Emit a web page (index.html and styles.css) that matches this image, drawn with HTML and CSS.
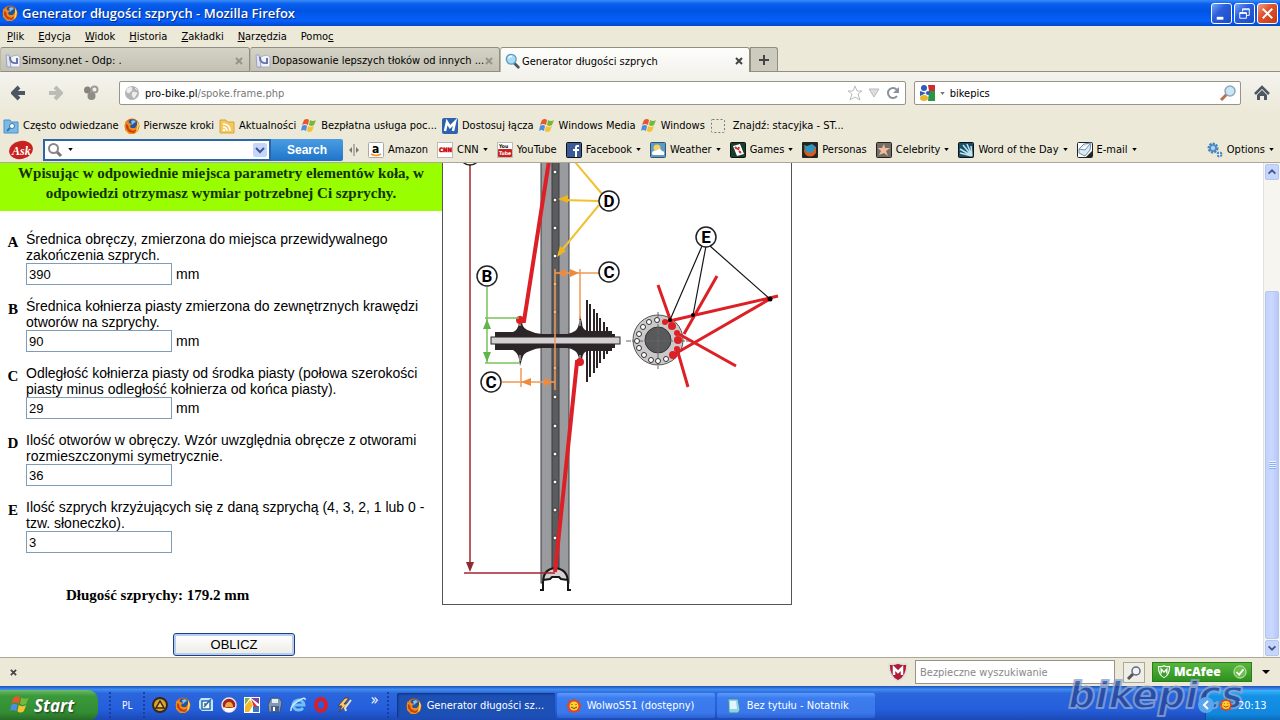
FILE: index.html
```html
<!DOCTYPE html>
<html lang="pl">

<head>
    <meta charset="UTF-8">
    <meta name="viewport" content="width=device-width, initial-scale=1.0">
    <title>Generator długości szprych</title>
    <link rel="stylesheet" href="styles.css">
</head>

<body>
    <!-- shared icons -->
    <svg class="defs" aria-hidden="true">
        <symbol id="firefox" viewBox="0 0 16 16">
            <circle cx="8" cy="8" r="7.5" fill="#d9601a" />
            <circle cx="8.5" cy="6.5" r="5" fill="#24559c" />
            <path d="M7 3l3-1 2 2-2 1-2 2z" fill="#7fc4ec" />
            <path d="M1 3l1 2 2-3 1 3 3 1-2 2 1 2 4 0 2-3 0-3 2 4-1 5-4 3-5 0-4-4z" fill="#ef8a1d" />
            <path d="M2 6l2 1 1 4 4 2 4-2-3 4-5-1-3-4z" fill="#c8410f" />
            <path d="M13 3l2 4-1 5-2 2 1-5z" fill="#ffd04a" />
        </symbol>
        <symbol id="flag" viewBox="0 0 16 16">
            <path d="M3 2q3-2 5 0L7 7Q4 5 1 7z" fill="#e8562a" />
            <path d="M9 2q3 2 6 0l-2 5q-3 2-5 0z" fill="#77b83a" />
            <path d="M1 8q3-2 5 0l-1 5q-3-2-5 0z" fill="#4a8fe0" />
            <path d="M7 8q3 2 6 0l-2 5q-3 2-5 0z" fill="#f6c330" />
        </symbol>
        <symbol id="page" viewBox="0 0 16 16">
            <path d="M4 4l8-2 3 2v10H4z" fill="#f4f5fb" stroke="#a9aec6" />
            <path d="M1 2l3 0 2 12H2z" fill="#e3e6f2" stroke="#9aa2c0" />
            <path d="M5 4q0 7 7 6V5" fill="none" stroke="#6474a8" stroke-width="2" />
        </symbol>
        <symbol id="lens" viewBox="0 0 18 18">
            <path d="M10 11l5 5" stroke="#4b5560" stroke-width="3" stroke-linecap="round" />
            <circle cx="7" cy="7" r="5.5" fill="#a9dcf5" stroke="#5f9cc0" stroke-width="1.5" />
            <path d="M4 6q1-3 4-2" stroke="#fff" stroke-width="1.5" fill="none" />
        </symbol>
        <symbol id="sun" viewBox="0 0 16 16">
            <path d="M8 0l2 3 3-1 0 3 3 3-3 2 1 4-4-1-2 3-2-3-4 1 1-4-3-2 3-3-1-3 4 1z" fill="#e8431b" />
            <circle cx="8" cy="8" r="4.5" fill="#ffd22e" />
            <path d="M6 6v1M10 6v1M5 9q3 3 6 0" stroke="#8a3a00" fill="none" />
        </symbol>
        <symbol id="shield" viewBox="0 0 20 20">
            <path d="M1 2q5 1 9-1 4 2 9 1 0 13-9 17Q1 15 1 2z" fill="#b01c36" stroke="#ddd" stroke-width="1.5" />
            <path d="M6 13V6l4 4 4-4v7" fill="none" stroke="#fff" stroke-width="2.5" />
        </symbol>
    </svg>

    <header class="titlebar">
        <svg class="icon"><use href="#firefox" /></svg>
        <h1>Generator długości szprych - Mozilla Firefox</h1>
        <div class="window-buttons">
            <button aria-label="Minimalizuj"><svg viewBox="0 0 20 20"><path d="M5 15h7" stroke="#fff" stroke-width="3" /></svg></button>
            <button aria-label="Przywróć"><svg viewBox="0 0 20 20"><path d="M8 8V5h7v7h-3M8 6h7M5 9h7v6H5zM5 10h7" stroke="#fff" fill="none" /></svg></button>
            <button class="close" aria-label="Zamknij"><svg viewBox="0 0 20 20"><path d="M5 5l10 10M15 5L5 15" stroke="#fff" stroke-width="2" /></svg></button>
        </div>
    </header>

    <nav class="menu">
        <a href="#"><u>P</u>lik</a>
        <a href="#"><u>E</u>dycja</a>
        <a href="#"><u>W</u>idok</a>
        <a href="#"><u>H</u>istoria</a>
        <a href="#"><u>Z</u>akładki</a>
        <a href="#"><u>N</u>arzędzia</a>
        <a href="#">Pomo<u>c</u></a>
    </nav>

    <div class="tabs">
        <div class="tab">
            <svg class="icon"><use href="#page" /></svg>
            <span>Simsony.net - Odp: .</span>
            <button aria-label="Zamknij kartę"><svg viewBox="0 0 8 8"><path d="M1 1l6 6M7 1L1 7" /></svg></button>
        </div>
        <div class="tab">
            <svg class="icon"><use href="#page" /></svg>
            <span>Dopasowanie lepszych tłoków od innych ...</span>
            <button aria-label="Zamknij kartę"><svg viewBox="0 0 8 8"><path d="M1 1l6 6M7 1L1 7" /></svg></button>
        </div>
        <div class="tab active">
            <svg class="icon"><use href="#lens" /></svg>
            <span>Generator długości szprych</span>
            <button aria-label="Zamknij kartę"><svg viewBox="0 0 8 8"><path d="M1 1l6 6M7 1L1 7" /></svg></button>
        </div>
        <button class="new-tab" aria-label="Nowa karta"><svg viewBox="0 0 12 12"><path d="M6 1v10M1 6h10" stroke="#444" stroke-width="2" /></svg></button>
    </div>

    <div class="navbar">
        <button aria-label="Wstecz"><svg viewBox="0 0 16 16"><path d="M8 2L2 8l6 6M3 8h11" fill="none" stroke="#4d5663" stroke-width="4" /></svg></button>
        <button aria-label="Dalej"><svg viewBox="0 0 16 16"><path d="M8 2l6 6-6 6M13 8H2" fill="none" stroke="#bcbcb6" stroke-width="4" /></svg></button>
        <button aria-label="Dodatek"><svg viewBox="0 0 16 16"><circle cx="4.5" cy="5" r="3.5" fill="#85857f" /><circle cx="11.5" cy="4.5" r="3" fill="none" stroke="#9c9c96" stroke-width="2" /><circle cx="8.5" cy="11" r="4" fill="#8e8e88" /></svg></button>
        <div class="url-box">
            <svg class="icon" viewBox="0 0 16 16"><circle cx="8" cy="8" r="7" fill="#b4b4b4" /><path d="M3 4l4-2 1 3-3 3-2-1zM9 7l4 1-3 5-2-3zM11 3l2 2" fill="#eee" stroke="#eee" /></svg>
            <a href="#">pro-bike.pl<span>/spoke.frame.php</span></a>
            <svg class="icon" viewBox="0 0 16 16"><path d="M8 1l2 5h5l-4 3 2 6-5-3-5 3 2-6-4-3h5z" fill="#fff" stroke="#bbb" /></svg>
            <svg class="small-icon" viewBox="0 0 12 12"><path d="M1 2h10L6 10z" fill="#ddd" stroke="#bbb" /></svg>
            <svg class="icon" viewBox="0 0 16 16"><path d="M12 11a5 5 0 1 1 0-6" fill="none" stroke="#8a929b" stroke-width="2" /><path d="M14 2v6H8z" fill="#8a929b" /></svg>
        </div>
        <div class="search-box">
            <svg class="icon" viewBox="0 0 16 16"><path d="M8 0h8v6H8z" fill="#d12b2b" /><path d="M9 6h7v10H9z" fill="#2a9644" /><path d="M0 0h9l1 6-1 10H0z" fill="#fff" /><ellipse cx="5" cy="3" rx="3" ry="3" fill="#2d5bc0" /><path d="M1 6l6 2-6 3z" fill="#2d5bc0" /><circle cx="9" cy="8" r="2" fill="#2d5bc0" /><ellipse cx="5" cy="13" rx="4" ry="3" fill="#e8b52c" /></svg>
            <svg class="caret" viewBox="0 0 6 4"><path d="M0 0h6L3 4z" fill="#777" /></svg>
            <input type="text" value="bikepics" aria-label="Szukaj">
            <svg class="icon" viewBox="0 0 16 16"><path d="M7 9l-6 6" stroke="#b5714a" stroke-width="3" /><circle cx="10" cy="6" r="5" fill="#c9e6f7" stroke="#8fa9bb" stroke-width="1.5" /></svg>
        </div>
        <button aria-label="Strona startowa"><svg viewBox="0 0 16 16"><path d="M1 9l7-7 7 7" fill="none" stroke="#4d5663" stroke-width="2.5" /><path d="M3 10l5-5 5 5v5h-3v-4H6v4H3z" fill="#4d5663" /></svg></button>
    </div>

    <nav class="bookmarks">
        <a href="#"><svg class="icon" viewBox="0 0 16 16"><path d="M1 2h6l1 2h7v11H1z" fill="#7db9e6" stroke="#4a90c8" /><circle cx="9" cy="8" r="2.5" fill="#fff" stroke="#2f76b5" /><path d="M7 10l-3 3" stroke="#2f76b5" stroke-width="2" /></svg>Często odwiedzane</a>
        <a href="#"><svg class="icon"><use href="#firefox" /></svg>Pierwsze kroki</a>
        <a href="#"><svg class="icon" viewBox="0 0 16 16"><path d="M1 2h6l1 2h7v11H1z" fill="#f5c95c" stroke="#d9a43a" /><circle cx="5" cy="12" r="1.3" fill="#fff" /><path d="M4 9q4 0 4 4M4 6q7 0 7 7" fill="none" stroke="#fff" stroke-width="1.5" /></svg>Aktualności</a>
        <a href="#"><svg class="icon"><use href="#flag" /></svg>Bezpłatna usługa poc...</a>
        <a href="#"><svg class="icon" viewBox="0 0 16 16"><rect width="16" height="16" rx="2" fill="#2f62ad" /><path d="M3 13l2-9 3 5 5-5-2 9" fill="none" stroke="#fff" stroke-width="2.5" /></svg>Dostosuj łącza</a>
        <a href="#"><svg class="icon"><use href="#flag" /></svg>Windows Media</a>
        <a href="#"><svg class="icon"><use href="#flag" /></svg>Windows</a>
        <a href="#" class="wide"><svg class="icon" viewBox="0 0 16 16"><rect x="1.5" y="1.5" width="13" height="13" rx="1" fill="none" stroke="#777" stroke-dasharray="2 2" /></svg>Znajdź: stacyjka - ST...</a>
    </nav>

    <div class="toolbar">
        <svg class="ask" viewBox="0 0 26 20"><ellipse cx="13" cy="10" rx="12" ry="9" fill="#c9211e" transform="rotate(-12 13 10)" /><text x="4" y="15">Ask</text></svg>
        <div class="ask-search">
            <svg class="icon" viewBox="0 0 16 16"><path d="M9 9l5 5" stroke="#777" stroke-width="3" /><circle cx="6.5" cy="6.5" r="4.5" fill="#fff" stroke="#888" stroke-width="2" /></svg>
            <svg class="caret" viewBox="0 0 6 4"><path d="M0 0h6L3 4z" /></svg>
            <input type="text" aria-label="Ask">
            <button aria-label="Rozwiń"><svg viewBox="0 0 14 14"><path d="M3 5l4 4 4-4" fill="none" stroke="#40568d" stroke-width="2" /></svg></button>
        </div>
        <button class="ask-button">Search</button>
        <svg class="splitter" viewBox="0 0 10 16"><path d="M5 2v12" stroke="#777" /><path d="M3 5L0 8l3 3zM7 5l3 3-3 3z" fill="#777" /></svg>
        <nav class="links">
            <a href="#"><svg class="icon" viewBox="0 0 16 16"><rect x=".5" y=".5" width="15" height="15" rx="1" fill="#fff" stroke="#aaa" /><text x="4" y="11" font-size="12">a</text><path d="M3 12q5 3 10 0" fill="none" stroke="#f0962a" stroke-width="1.5" /></svg>Amazon</a>
            <a href="#"><svg class="icon" viewBox="0 0 16 16"><rect x=".5" y=".5" width="15" height="15" fill="#fff" stroke="#bbb" /><text x="2" y="10" font-size="6" fill="#c00" stroke="#c00" stroke-width=".5">CNN</text></svg>CNN<svg class="caret" viewBox="0 0 6 4"><path d="M0 0h6L3 4z" /></svg></a>
            <a href="#"><svg class="icon" viewBox="0 0 16 16"><rect x=".5" y=".5" width="15" height="15" fill="#fff" stroke="#bbb" /><rect x="1" y="7" width="14" height="8" rx="1" fill="#c9211e" /><text x="2" y="6" font-size="5">You</text><text x="2" y="13" font-size="5" fill="#fff">Tube</text></svg>YouTube</a>
            <a href="#"><svg class="icon" viewBox="0 0 16 16"><rect x=".5" y=".5" width="15" height="15" rx="1" fill="#3b5998" stroke="#111" /><path d="M13 4h-2q-1 0-1 2v9M7 8h6" fill="none" stroke="#fff" stroke-width="2" /></svg>Facebook<svg class="caret" viewBox="0 0 6 4"><path d="M0 0h6L3 4z" /></svg></a>
            <a href="#"><svg class="icon" viewBox="0 0 16 16"><rect x=".5" y=".5" width="15" height="15" rx="1" fill="#5c9bc5" stroke="#34546d" /><circle cx="7" cy="6" r="3.5" fill="#f4d460" /><path d="M2 12q0-4 4-3 4-4 6 0 3 0 2 4H3z" fill="#fff" /></svg>Weather<svg class="caret" viewBox="0 0 6 4"><path d="M0 0h6L3 4z" /></svg></a>
            <a href="#"><svg class="icon" viewBox="0 0 16 16"><rect x=".5" y=".5" width="15" height="15" rx="1" fill="#173f2c" stroke="#111" /><path d="M3 4l7-2 4 10-7 2z" fill="#fff" /><path d="M5 5l2 2M9 5l-1 3M9 9l2 2" stroke="#c33" stroke-width="2" /></svg>Games<svg class="caret" viewBox="0 0 6 4"><path d="M0 0h6L3 4z" /></svg></a>
            <a href="#"><svg class="icon" viewBox="0 0 16 16"><rect width="16" height="16" rx="1" fill="#26251f" /><path d="M2 3l3 1 5-2 4 3v6l-5 3-5-2z" fill="#2f95bd" /><path d="M2 3q0 8 6 8 4 0 5-6 3 6-2 9-8 2-9-5z" fill="#e4571c" /></svg>Personas</a>
            <a href="#"><svg class="icon" viewBox="0 0 16 16"><rect x=".5" y=".5" width="15" height="15" rx="1" fill="#756d67" stroke="#222" /><path d="M8 2l1 4 5 0-4 3 2 5-4-3-5 2 2-4-3-3h4z" fill="#f1bd9c" /></svg>Celebrity<svg class="caret" viewBox="0 0 6 4"><path d="M0 0h6L3 4z" /></svg></a>
            <a href="#"><svg class="icon" viewBox="0 0 16 16"><rect x=".5" y=".5" width="15" height="15" rx="1" fill="#17506c" stroke="#111" /><path d="M14 14L2 11M14 14L2 7M14 14L5 3M14 14L9 2M14 14L13 4" stroke="#bfe4ee" stroke-width="1.5" /></svg>Word of the Day<svg class="caret" viewBox="0 0 6 4"><path d="M0 0h6L3 4z" /></svg></a>
            <a href="#"><svg class="icon" viewBox="0 0 16 16"><rect x=".5" y=".5" width="15" height="15" rx="1" fill="#fff" stroke="#222" /><path d="M2 7l5-5 7-1-1 7-5 6-6-3zM2 7l6 1 5-6" fill="#dceaf5" stroke="#6f8ea8" /><path d="M9 15l6-6v6z" fill="#223" /></svg>E-mail<svg class="caret" viewBox="0 0 6 4"><path d="M0 0h6L3 4z" /></svg></a>
        </nav>
        <a href="#" class="options"><svg class="icon" viewBox="0 0 16 16"><circle cx="6" cy="6" r="4" fill="#5b9bd5" stroke="#4a85bd" stroke-width="3" stroke-dasharray="2 1" /><circle cx="6" cy="6" r="2" fill="#b9d8f0" /><circle cx="12.5" cy="12.5" r="2" fill="#fff" stroke="#4a85bd" stroke-width="2" stroke-dasharray="2 1" /></svg>Options<svg class="caret" viewBox="0 0 6 4"><path d="M0 0h6L3 4z" /></svg></a>
    </div>

    <main class="page">
        <form class="calc">
            <p class="intro">Wpisując w odpowiednie miejsca parametry elementów koła, w odpowiedzi otrzymasz wymiar potrzebnej Ci szprychy.</p>
            <div class="row">
                <b>A</b>
                <div>
                    <label for="a">Średnica obręczy, zmierzona do miejsca przewidywalnego zakończenia szprych.</label>
                    <div class="field"><input type="text" id="a" value="390"> mm</div>
                </div>
            </div>
            <div class="row">
                <b>B</b>
                <div>
                    <label for="b">Średnica kołnierza piasty zmierzona do zewnętrznych krawędzi otworów na szprychy.</label>
                    <div class="field"><input type="text" id="b" value="90"> mm</div>
                </div>
            </div>
            <div class="row">
                <b>C</b>
                <div>
                    <label for="c">Odległość kołnierza piasty od środka piasty (połowa szerokości piasty minus odległość kołnierza od końca piasty).</label>
                    <div class="field"><input type="text" id="c" value="29"> mm</div>
                </div>
            </div>
            <div class="row">
                <b>D</b>
                <div>
                    <label for="d">Ilość otworów w obręczy. Wzór uwzględnia obręcze z otworami rozmieszczonymi symetrycznie.</label>
                    <div class="field"><input type="text" id="d" value="36"></div>
                </div>
            </div>
            <div class="row">
                <b>E</b>
                <div>
                    <label for="e">Ilość szprych krzyżujących się z daną szprychą (4, 3, 2, 1 lub 0 - tzw. słoneczko).</label>
                    <div class="field"><input type="text" id="e" value="3"></div>
                </div>
            </div>
            <p class="result">Długość szprychy: 179.2 mm</p>
            <button type="button" class="submit">OBLICZ</button>
        </form>

        <svg class="diagram" viewBox="1 0 348 441">
            <!-- rim -->
            <rect x="99" y="-2" width="28" height="422" fill="#999b9f" stroke="#3c3c3e" />
            <rect x="110" y="-2" width="7" height="408" fill="#5b5c5f" stroke="#3c3c3e" />
            <path d="M98 427h4v-10q0-12 11-12 12 0 12 12v10h4v3H98z" fill="#fff" />
            <path d="M102 417q0-11 11-12 12 1 12 12l-6-1-6-2-6 2z" fill="#d6cfd1" />
            <path d="M98 427h3v-7q0-14 12-15 13 1 13 15v7h3M101 417l7-1 2-2h7l2 2 7 1" fill="none" stroke="#161616" stroke-width="2" />
            <g fill="#fff" stroke="#333">
                <circle cx="113" cy="9" r="2" /><circle cx="113" cy="37" r="2" /><circle cx="113" cy="65" r="2" />
                <circle cx="113" cy="93" r="2" /><circle cx="113" cy="121" r="2" /><circle cx="113" cy="149" r="2" />
                <circle cx="113" cy="205" r="2" /><circle cx="113" cy="234" r="2" /><circle cx="113" cy="263" r="2" />
                <circle cx="113" cy="291" r="2" /><circle cx="113" cy="319" r="2" /><circle cx="113" cy="347" r="2" />
                <circle cx="113" cy="375" r="2" />
            </g>
            <!-- A -->
            <path d="M28 0v402M22 410h91" stroke="#a3262e" stroke-width="1.5" />
            <path d="M24 399h8l-4 10z" fill="#8f2a30" />
            <!-- hub -->
            <path d="M53 169h18q5-2 6-9l1-8 2 8q1 6 8 8 6 3 12 3h25q5-1 8-3 3-2 4-8l1-8 2 8q0 6 5 8h25v3h3v14h-3v3h-25q-4 1-5 8l-2 7-1-7q-1-6-4-8-4-3-8-3h-25q-6 0-12 3-7 2-8 8l-2 7-1-7q-1-6-6-9H53z" fill="#2c2528" />
            <path d="M145 137v82M148 141v73M152 146v64M155 150v55M158 155v45M162 159v37M165 164v27" stroke="#2c2528" stroke-width="2" />
            <rect x="49" y="174" width="129" height="7" fill="#d3d0d2" stroke="#2c2528" />
            <path d="M78 157v6M138 157v6M78 192v6M138 192v6" stroke="#ddd" />
            <!-- spokes -->
            <path d="M107-2L82 158h-5" fill="none" stroke="#dd1f26" stroke-width="4" />
            <path d="M140 199h-5L113 409" fill="none" stroke="#dd1f26" stroke-width="4" />
            <circle cx="78" cy="157" r="4" fill="#dd1f26" />
            <circle cx="138" cy="199" r="4" fill="#dd1f26" />
            <!-- B -->
            <path d="M45 124v76M43 155h34M43 200h34" stroke="#79c25a" stroke-width="1.5" />
            <path d="M41 166h8l-4-10zM41 189h8l-4 10z" fill="#62b54a" />
            <!-- C -->
            <path d="M113 106v121M138 106v50M113 110h44M79 205v19M60 219h53" stroke="#ee9a55" stroke-width="1.5" />
            <path d="M115 110l9-4v8zM137 110l-9-4v8zM79 219l10-4v8zM112 219l-10-4v8z" fill="#ee8a3c" />
            <!-- D -->
            <path d="M133-1l27 32M157 38l-36-1M157 42l-37 45" stroke="#f1c232" stroke-width="2" />
            <path d="M116 36l10-4v8zM115 94l3-11 6 5z" fill="#f1b51c" />
            <!-- side view of the hub -->
            <circle cx="216" cy="177" r="25" fill="#cbc8ca" stroke="#555" />
            <circle cx="216" cy="177" r="13" fill="#58595b" stroke="#333" />
            <path d="M184 178h64M216 149v57" stroke="#666" stroke-dasharray="5 1" />
            <g fill="#fff" stroke="#333">
                <circle cx="215" cy="157" r="2.5" /><circle cx="207" cy="159" r="2.5" /><circle cx="201" cy="164" r="2.5" />
                <circle cx="197" cy="171" r="2.5" /><circle cx="195" cy="178" r="2.5" /><circle cx="197" cy="185" r="2.5" />
                <circle cx="202" cy="192" r="2.5" /><circle cx="209" cy="197" r="2.5" /><circle cx="216" cy="198" r="2.5" />
                <circle cx="224" cy="196" r="2.5" />
            </g>
            <path d="M216 122l12 34M275 113l-33 58M223 159l113-26M231 192l97-56M235 170l59 33M235 186l11 38" stroke="#dd1f26" stroke-width="3" />
            <g fill="#dd1f26">
                <circle cx="223" cy="159" r="3" /><circle cx="230" cy="163" r="4" /><circle cx="235" cy="170" r="3" />
                <circle cx="236" cy="177" r="4" /><circle cx="235" cy="186" r="3" /><circle cx="231" cy="192" r="4" />
            </g>
            <path d="M260 83l-32 74M264 83l-13 69M268 83l60 53" stroke="#161616" stroke-width="1.2" />
            <circle cx="228" cy="157" r="2" /><circle cx="251" cy="152" r="2" /><circle cx="328" cy="136" r="2.5" />
            <!-- callouts -->
            <g fill="#fff" stroke="#222" stroke-width="1.5">
                <circle cx="28" cy="-8" r="10" /><circle cx="167" cy="38" r="10" /><circle cx="167" cy="109" r="10" />
                <circle cx="45" cy="113" r="10" /><circle cx="49" cy="219" r="10" /><circle cx="264" cy="74" r="10" />
            </g>
            <g class="callouts">
                <text x="167" y="44">D</text>
                <text x="167" y="115">C</text>
                <text x="45" y="119">B</text>
                <text x="49" y="225">C</text>
                <text x="264" y="80">E</text>
            </g>
        </svg>

        <div class="scrollbar">
            <button aria-label="W górę"><svg viewBox="0 0 14 14"><path d="M3 9l4-4 4 4" /></svg></button>
            <div class="track"><div class="thumb"><i></i></div></div>
            <button aria-label="W dół"><svg viewBox="0 0 14 14"><path d="M3 5l4 4 4-4" /></svg></button>
        </div>
    </main>

    <div class="addon-bar">
        <button class="addon-close" aria-label="Zamknij pasek"><svg viewBox="0 0 8 8"><path d="M1 1l6 6M7 1L1 7" stroke="#444" stroke-width="2" /></svg></button>
        <svg class="shield"><use href="#shield" /></svg>
        <input type="text" placeholder="Bezpieczne wyszukiwanie" aria-label="Bezpieczne wyszukiwanie">
        <button class="safe-search" aria-label="Szukaj"><svg viewBox="0 0 16 16"><path d="M7 9l-5 5" stroke="#555" stroke-width="3" /><circle cx="10" cy="6" r="4" fill="#eef4fa" stroke="#667" stroke-width="1.5" /></svg></button>
        <button class="mcafee">
            <svg viewBox="0 0 20 20"><path d="M2 2q4 1 8-1 4 2 8 1 0 12-8 16Q2 14 2 2z" fill="none" stroke="#fff" stroke-width="1.5" /><path d="M6 12V6l4 4 4-4v6" fill="none" stroke="#fff" stroke-width="2" /></svg>
            McAfee
            <svg class="ok" viewBox="0 0 16 16"><circle cx="8" cy="8" r="7" fill="#6cc04a" stroke="#d8f0cc" /><path d="M4 8l3 3 5-6" fill="none" stroke="#fff" stroke-width="2" /></svg>
        </button>
        <svg class="more" viewBox="0 0 8 4"><path d="M0 0h8L4 4z" /></svg>
    </div>

    <footer class="taskbar">
        <button class="start"><svg viewBox="0 0 16 16"><use href="#flag" /></svg>Start</button>
        <span class="grip"></span>
        <span class="lang">PL</span>
        <span class="grip"></span>
        <div class="quick">
            <svg viewBox="0 0 16 16"><circle cx="8" cy="8" r="7" fill="#e0a02c" stroke="#33291b" stroke-width="2" /><path d="M8 4l4 7H4z" fill="#f5c24a" stroke="#33291b" stroke-width="1.5" /></svg>
            <svg><use href="#firefox" /></svg>
            <svg viewBox="0 0 16 16"><path d="M3 1h10l2 2v11H4l-3-3V4z" fill="#bfe6fa" /><path d="M4 4h8v8H4z" fill="#fff" stroke="#2d6ca8" stroke-width="1.5" /><path d="M6 10l7-8M6 7h3" stroke="#2d6ca8" stroke-width="1.5" /></svg>
            <svg viewBox="0 0 16 16"><circle cx="8" cy="8" r="7" fill="#a02424" stroke="#f0e2d8" stroke-width="1.5" /><path d="M2 10q6 2 12 0-2 5-6 5t-6-5z" fill="#fff" /><path d="M4 10q0-5 4-5t4 5z" fill="#f2a53a" /></svg>
            <svg viewBox="0 0 16 16"><rect width="16" height="16" fill="#fff" /><path d="M1 1h5l-5 7z" fill="#7ab648" /><path d="M7 1h8v6z" fill="#8c3f97" /><path d="M1 9l5-6 3 5-4 7H1z" fill="#f0b929" /><path d="M9 9h6v6H9z" fill="#3b78c4" /><path d="M7 2l7 8h-4z" fill="#d8322c" /></svg>
            <svg viewBox="0 0 16 16"><path d="M4 1h8l3 4-2 10H2L1 8z" fill="#8097b8" stroke="#3c5275" /><path d="M5 2h6v4H5z" fill="#e4ecf5" /><path d="M4 9h8v6H4z" fill="#43608e" /><path d="M6 10h2v4H6z" fill="#fff" /></svg>
            <svg viewBox="0 0 16 16"><path d="M13 11a5.5 5 0 1 1 1-3H4" fill="none" stroke="#6fc0f5" stroke-width="3" /><path d="M1 14Q0 9 8 4t7-1" fill="none" stroke="#cbe8fb" stroke-width="1.5" /></svg>
            <svg viewBox="0 0 16 16"><ellipse cx="8" cy="8" rx="5" ry="6" fill="none" stroke="#d81f2a" stroke-width="4" /></svg>
            <svg viewBox="0 0 16 16"><path d="M9 1l-7 8h4l-3 6 9-8H8l5-6z" fill="#f6c97c" stroke="#5b4020" /><path d="M15 3l-6 8 1 3" fill="none" stroke="#f0ddc0" stroke-width="2" /></svg>
        </div>
        <span class="chevrons">»</span>
        <span class="grip"></span>
        <div class="tasks">
            <button class="pressed"><svg><use href="#firefox" /></svg>Generator długości sz...</button>
            <button><svg><use href="#sun" /></svg>WolwoS51 (dostępny)</button>
            <button><svg viewBox="0 0 16 16"><path d="M2 1h10l2 11-2 3H3z" fill="#8fd0ea" stroke="#3e86a8" /><path d="M4 3h6l1 8H4z" fill="#e2f5fb" /></svg>Bez tytułu - Notatnik</button>
        </div>
        <div class="tray">
            <button aria-label="Pokaż ukryte ikony"><svg viewBox="0 0 16 16"><path d="M10 4L6 8l4 4" fill="none" stroke="#fff" stroke-width="2" /></svg></button>
            <svg class="icon"><use href="#sun" /></svg>
            <time>20:13</time>
        </div>
        <svg class="watermark" viewBox="0 0 200 36"><text x="4" y="26">bikepics</text></svg>
    </footer>
</body>

</html>
```
FILE: styles.css
```css
* {
    box-sizing: border-box;
}

body {
    margin: 0;
    height: 100vh;
    display: flex;
    flex-direction: column;
    overflow: hidden;
    background: #ece9d8;
    font-family: Tahoma, "DejaVu Sans Condensed", "DejaVu Sans", sans-serif;
    font-size: 11px;
    color: #000;
}

a {
    color: inherit;
    text-decoration: none;
}

button,
input {
    font: inherit;
    color: inherit;
    margin: 0;
    padding: 0;
    border: 0;
    background: none;
}

svg {
    display: block;
    flex: none;
}

.defs {
    position: absolute;
    width: 0;
    height: 0;
}

.icon {
    width: 16px;
    height: 16px;
}

.small-icon {
    width: 12px;
    height: 12px;
}

.caret {
    width: 5px;
    height: 3px;
}

/* title bar */
.titlebar {
    height: 26px;
    flex: none;
    display: flex;
    align-items: center;
    gap: 4px;
    padding: 0 2px;
    background: linear-gradient(#3a8cf5, #0a5fee 15%, #0054e3 40%, #0660fa 80%, #0348c8);
}

.titlebar h1 {
    flex: 1;
    margin: 0;
    font-family: "Trebuchet MS", "Open Sans", sans-serif;
    font-size: 13px;
    font-weight: 600;
    color: #fff;
    text-shadow: 1px 1px #0a2a80;
}

.window-buttons {
    display: flex;
    gap: 2px;
}

.window-buttons button {
    width: 21px;
    height: 21px;
    border: 1px solid #fff;
    border-radius: 3px;
    background: linear-gradient(135deg, #7aa7f5, #2a5edb 40%, #1c4bc8);
}

.window-buttons .close {
    background: linear-gradient(135deg, #f0a086, #e0532e 40%, #c23a14);
}

/* menu */
.menu {
    height: 21px;
    flex: none;
    display: flex;
    align-items: center;
    gap: 14px;
    padding: 0 7px;
}

/* tabs */
.tabs {
    height: 25px;
    flex: none;
    display: flex;
    border-bottom: 1px solid #8f8e80;
}

.tab {
    width: 250px;
    height: 25px;
    display: flex;
    align-items: center;
    gap: 1px;
    padding: 2px 6px 0 4px;
    border: 1px solid #8f8e80;
    border-left-color: #b9b7a8;
    border-radius: 3px 3px 0 0;
    background: linear-gradient(#d5d3c5, #c3c1b3);
}

.tab span {
    flex: 1;
    overflow: hidden;
    white-space: nowrap;
}

.tab button {
    width: 8px;
    height: 8px;
}

.tab button svg {
    stroke: #96948a;
    stroke-width: 2;
}

.tab.active {
    background: linear-gradient(#fdfdfb, #f4f3ee);
    border-bottom: 0;
}

.tab.active button svg {
    stroke: #444;
}

.new-tab {
    width: 28px;
    height: 24px;
    padding: 0 7px;
    border: 1px solid #8f8e80;
    border-bottom: 0;
    border-radius: 0 3px 0 0;
    background: #cdcbbd;
}

/* address bar */
.navbar {
    height: 42px;
    flex: none;
    display: flex;
    align-items: center;
    gap: 8px;
    padding: 0 10px 0 11px;
    background: linear-gradient(#f4f3ee, #ece9d8);
}

.navbar > button {
    width: 16px;
    height: 16px;
    margin-right: 12px;
}

.navbar > button:last-child {
    margin: 0 0 0 5px;
}

.url-box,
.search-box {
    height: 24px;
    display: flex;
    align-items: center;
    gap: 5px;
    padding: 0 4px;
    border: 1px solid #97958a;
    border-radius: 2px;
    background: #fff;
}

.url-box {
    flex: 1;
}

.url-box a {
    flex: 1;
}

.url-box a span {
    color: #777;
}

.search-box {
    width: 26%;
}

.search-box input {
    flex: 1;
    min-width: 0;
}

/* bookmarks */
.bookmarks {
    height: 23px;
    flex: none;
    display: flex;
    align-items: center;
    gap: 5px;
    padding: 0 3px;
    white-space: nowrap;
}

.bookmarks a {
    display: flex;
    align-items: center;
    gap: 4px;
}

.bookmarks .wide {
    gap: 7px;
}

/* Ask toolbar */
.toolbar {
    height: 26px;
    flex: none;
    display: flex;
    align-items: center;
    padding: 0 6px 0 8px;
    border-bottom: 1px solid #aca899;
    white-space: nowrap;
}

.ask {
    width: 26px;
    height: 20px;
    margin-right: 9px;
    font-size: 12px;
    font-style: italic;
    font-weight: bold;
    font-family: "Liberation Serif", serif;
    fill: #fff;
}

.ask-search {
    width: 228px;
    height: 22px;
    display: flex;
    align-items: center;
    gap: 5px;
    padding: 0 2px;
    border: 2px solid #2b67a8;
    background: #fff;
}

.ask-search input {
    flex: 1;
    min-width: 0;
}

.ask-search button,
.scrollbar button {
    width: 14px;
    height: 14px;
    border-radius: 2px;
    background: #c6d5fb;
}

.ask-button {
    width: 72px;
    height: 22px;
    font-family: "Liberation Sans", Arial, sans-serif;
    font-size: 12px;
    font-weight: bold;
    color: #fff;
    background: linear-gradient(#4a9de3, #1f74c8);
    border-radius: 0 2px 2px 0;
}

.splitter {
    width: 10px;
    height: 16px;
    margin: 0 9px 0 6px;
}

.links {
    flex: 1;
    display: flex;
    align-items: center;
    gap: 9px;
}

.links a,
.options {
    display: flex;
    align-items: center;
    gap: 4px;
}

.links text {
    font-weight: bold;
}

/* page */
.page {
    flex: 1;
    min-height: 0;
    display: flex;
    align-items: flex-start;
    overflow: hidden;
    background: #fff;
}

.calc {
    width: 442px;
    flex: none;
    font-family: Arial, "Liberation Sans", sans-serif;
    font-size: 14px;
    line-height: 16px;
}

.intro {
    margin: 0 0 20px;
    padding: 0 8px 8px;
    background: #9f0;
    font: bold 15px/20px "Times New Roman", "Liberation Serif", serif;
    text-align: center;
    color: #143300;
}

.row {
    display: flex;
    gap: 6px;
    margin-bottom: 13px;
    padding: 0 10px 0 6px;
}

.row b {
    width: 14px;
    flex: none;
    padding-top: 3px;
    font-family: "Times New Roman", "Liberation Serif", serif;
    font-size: 15px;
    text-align: center;
}

.row label {
    display: block;
}

.field {
    display: flex;
    align-items: center;
    gap: 4px;
}

.field input {
    width: 146px;
    height: 22px;
    padding: 0 2px;
    border: 1px solid #7f9db9;
    font-size: 13px;
}

.result {
    margin: 32px 0 28px 66px;
    font: bold 15px/20px "Times New Roman", "Liberation Serif", serif;
}

.submit {
    display: block;
    width: 122px;
    height: 23px;
    margin-left: 173px;
    border: 1px solid #1c3f7c;
    border-radius: 3px;
    background: linear-gradient(#fff, #ecebe5);
    box-shadow: inset 0 0 0 2px #b5cdf3;
    font-size: 13px;
}

.diagram {
    width: 350px;
    height: 442px;
    border: 1px solid #555;
    border-top: 0;
}

.callouts {
    font-family: Roboto, sans-serif;
    font-size: 17px;
    font-weight: bold;
    text-anchor: middle;
}

.scrollbar {
    align-self: stretch;
    width: 17px;
    margin-left: auto;
    display: flex;
    flex-direction: column;
    align-items: center;
    gap: 1px;
    padding: 1px;
    background: #f6f5ef;
    border-left: 1px solid #e4e3da;
}

.scrollbar button {
    height: 16px;
    border: 1px solid #b3c6f2;
}

.scrollbar button svg {
    fill: none;
    stroke: #40568d;
    stroke-width: 2;
}

.track {
    flex: 1;
    width: 14px;
    display: flex;
    align-items: flex-end;
}

.thumb {
    width: 14px;
    height: 76%;
    display: flex;
    align-items: center;
    justify-content: center;
    border: 1px solid #b3c6f2;
    border-radius: 2px;
    background: linear-gradient(to right, #c3d3fd, #cad8ff, #b5c8f8);
}

.thumb i {
    width: 7px;
    height: 8px;
    background: repeating-linear-gradient(#eef4fe 0 1px, #8cb0f8 1px 2px);
}

/* add-on bar */
.addon-bar {
    height: 29px;
    flex: none;
    display: flex;
    align-items: center;
    padding: 0 10px;
    border-top: 1px solid #aca899;
}

.addon-close {
    width: 7px;
    height: 7px;
    margin-right: auto;
}

.addon-close svg {
    width: 7px;
    height: 7px;
}

.shield {
    width: 20px;
    height: 20px;
}

.addon-bar input {
    width: 200px;
    height: 24px;
    margin: 0 8px 0 7px;
    padding: 0 4px;
    border: 1px solid #97958a;
    background: #fff;
}

.addon-bar input::placeholder {
    color: #888;
}

.safe-search {
    width: 22px;
    height: 21px;
    padding: 2px;
    border: 1px solid #aaa89c;
    background: #eeede6;
}

.mcafee {
    width: 100px;
    height: 20px;
    margin: 0 10px 0 7px;
    display: flex;
    align-items: center;
    gap: 3px;
    padding: 0 4px;
    border: 1px solid #2a7d1a;
    background: linear-gradient(#56b53c, #2d9120);
    font-family: "Open Sans", sans-serif;
    font-size: 12px;
    font-weight: 800;
    line-height: 14px;
    color: #fff;
}

.mcafee svg {
    width: 14px;
    height: 14px;
}

.mcafee .ok {
    margin-left: auto;
}

.more {
    width: 8px;
    height: 4px;
}

/* taskbar */
.taskbar {
    position: relative;
    height: 34px;
    flex: none;
    display: flex;
    align-items: flex-end;
    padding-top: 4px;
    background: linear-gradient(#1d50b8, #3f8cf0 10%, #2c66dc 22%, #245edb 70%, #1c49b5);
    color: #fff;
}

.taskbar > * {
    height: 30px;
}

.start {
    width: 98px;
    display: flex;
    align-items: center;
    gap: 4px;
    padding-left: 10px;
    border-radius: 0 10px 8px 0;
    background: linear-gradient(#6fba68, #3a9a3a 20%, #338c33 75%, #266b26);
    font-family: "Open Sans", sans-serif;
    font-size: 17px;
    font-weight: bold;
    font-style: italic;
    text-shadow: 1px 1px 2px #1b3d1b;
}

.start svg {
    width: 20px;
    height: 20px;
}

.grip {
    width: 4px;
    margin: 0 10px;
    border: solid transparent;
    border-width: 5px 0;
    background: radial-gradient(#163f9f 30%, transparent 40%) 0 0 / 4px 4px;
}

.chevrons + .grip {
    margin: 0 7px;
}

.lang,
.chevrons,
.quick {
    display: flex;
    align-items: center;
}

.lang {
    font-size: 10px;
}

.quick {
    gap: 7px;
    margin-left: -4px;
}

.quick svg,
.tasks svg {
    width: 16px;
    height: 16px;
}

.chevrons {
    margin-left: 18px;
    padding-bottom: 10px;
    font-size: 15px;
}

.tasks {
    flex: 1;
    display: flex;
    gap: 2px;
    padding: 3px 0 2px;
}

.tasks button {
    width: 158px;
    display: flex;
    align-items: center;
    gap: 5px;
    padding-left: 9px;
    border-radius: 2px;
    background: linear-gradient(#5c9bfa, #3b7df0 20%, #3a77ea 80%, #2b62d2);
}

.tasks .pressed {
    background: #1d50b5;
    box-shadow: inset 1px 1px 2px #102f78;
}

.tray {
    width: 75px;
    display: flex;
    align-items: center;
    gap: 5px;
    border-left: 1px solid #0f4a9f;
    background: linear-gradient(#3bb5f5, #1591e8 20%, #1187de 80%, #0d6cba);
}

.tray button,
.tray .icon,
.tray time {
    position: relative;
    z-index: 1;
}

.tray button {
    width: 16px;
    height: 16px;
    margin-left: -8px;
    border-radius: 50%;
    background: #58a6ee;
}

.tray .icon {
    width: 14px;
}

/* photo site stamp lying over the corner */
.watermark {
    position: absolute;
    right: 16px;
    top: -4px;
    width: 200px;
    height: 36px;
    overflow: visible;
    opacity: .8;
    font-family: "DejaVu Sans", sans-serif;
    font-size: 38px;
    font-weight: bold;
    font-style: italic;
    fill: #27479a;
    stroke: #8da4cf;
    stroke-width: 2;
    stroke-linejoin: round;
}
```
